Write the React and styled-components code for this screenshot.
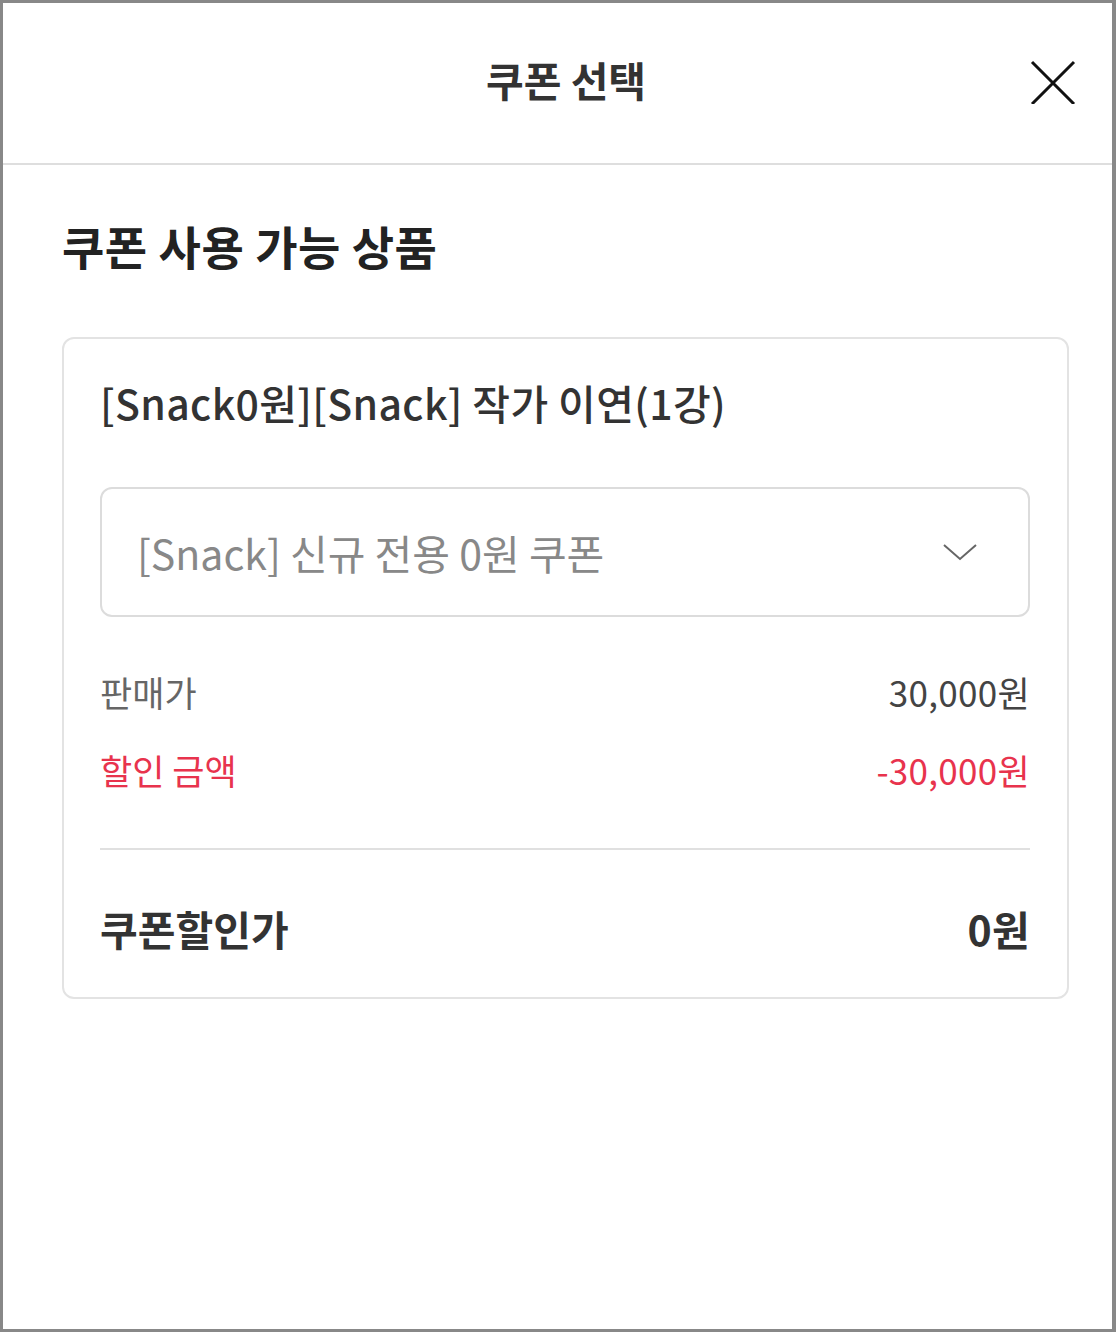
import React from 'react';
import styled, { createGlobalStyle } from 'styled-components';

const GlobalStyle = createGlobalStyle`
  html, body {
    margin: 0;
    padding: 0;
    background: #fff;
  }
  body {
    font-family: "Noto Sans CJK KR", "Noto Sans", sans-serif;
  }
`;

const Frame = styled.div`
  box-sizing: border-box;
  width: 1116px;
  height: 1332px;
  border: 3px solid #888;
  border-right-width: 4px;
  background: #fff;
  display: flex;
  flex-direction: column;
`;

const Header = styled.header`
  box-sizing: border-box;
  position: relative;
  height: 162px;
  border-bottom: 2px solid #dedede;
  display: flex;
  align-items: center;
  justify-content: center;
  padding: 0 0 8px 17px;
`;

const Title = styled.h1`
  margin: 0;
  font-size: 41px;
  font-weight: 700;
  color: #333;
`;

const CloseButton = styled.button`
  position: absolute;
  right: 36px;
  top: 55px;
  width: 46px;
  height: 46px;
  padding: 0;
  border: 0;
  background: none;
  cursor: pointer;
`;

const Body = styled.main`
  padding: 50px 0 0 59px;
`;

const SectionTitle = styled.h2`
  margin: 0 0 62px;
  font-size: 46px;
  line-height: 60px;
  font-weight: 700;
  color: #222;
  letter-spacing: 0.5px;
`;

const Card = styled.section`
  box-sizing: border-box;
  width: 1007px;
  border: 2px solid #e3e3e3;
  border-radius: 12px;
  padding: 35px 37px 41px 36px;
`;

const ProductName = styled.div`
  font-size: 41px;
  line-height: 56px;
  font-weight: 500;
  color: #333;
  letter-spacing: 0.35px;
`;

const Select = styled.div`
  box-sizing: border-box;
  margin-top: 57px;
  height: 130px;
  border: 2px solid #dcdcdc;
  border-radius: 12px;
  display: flex;
  align-items: center;
  justify-content: space-between;
  padding: 0 50px 0 35px;
  cursor: pointer;
`;

const SelectText = styled.span`
  font-size: 41px;
  font-weight: 400;
  color: #888;
`;

const Row = styled.div`
  display: flex;
  justify-content: space-between;
  align-items: center;
  margin-top: ${p => p.$gap}px;
  font-size: ${p => (p.$total ? 41 : 35)}px;
  line-height: ${p => (p.$total ? 56 : 44)}px;
  font-weight: ${p => (p.$total ? 700 : 400)};
  color: ${p => p.$color};
`;

const Label = styled.span`
  color: ${p => p.$color || 'inherit'};
`;

const Amount = styled.span`
  letter-spacing: 0.3px;
`;

const Divider = styled.hr`
  margin: 56px 0 0;
  border: 0;
  border-top: 2px solid #e0e0e0;
`;

function CloseIcon() {
  return (
    <svg width="46" height="46" viewBox="0 0 46 46">
      <path d="M2 4 L44 46 M44 4 L2 46" stroke="#111" strokeWidth="3" fill="none" />
    </svg>
  );
}

function ChevronDown() {
  return (
    <svg width="36" height="20" viewBox="0 0 36 20">
      <path d="M2 3 L18 17 L34 3" stroke="#666" strokeWidth="2" fill="none" />
    </svg>
  );
}

export default function App() {
  return (
    <>
      <GlobalStyle />
      <Frame>
        <Header>
          <Title>쿠폰 선택</Title>
          <CloseButton aria-label="닫기">
            <CloseIcon />
          </CloseButton>
        </Header>
        <Body>
          <SectionTitle>쿠폰 사용 가능 상품</SectionTitle>
          <Card>
            <ProductName>[Snack0원][Snack] 작가 이연(1강)</ProductName>
            <Select>
              <SelectText>[Snack] 신규 전용 0원 쿠폰</SelectText>
              <ChevronDown />
            </Select>
            <Row $gap={53} $color="#444">
              <Label $color="#666">판매가</Label>
              <Amount>30,000원</Amount>
            </Row>
            <Row $gap={34} $color="#e8334d">
              <Label>할인 금액</Label>
              <Amount>-30,000원</Amount>
            </Row>
            <Divider />
            <Row $gap={50} $color="#333" $total>
              <Label>쿠폰할인가</Label>
              <Amount>0원</Amount>
            </Row>
          </Card>
        </Body>
      </Frame>
    </>
  );
}
